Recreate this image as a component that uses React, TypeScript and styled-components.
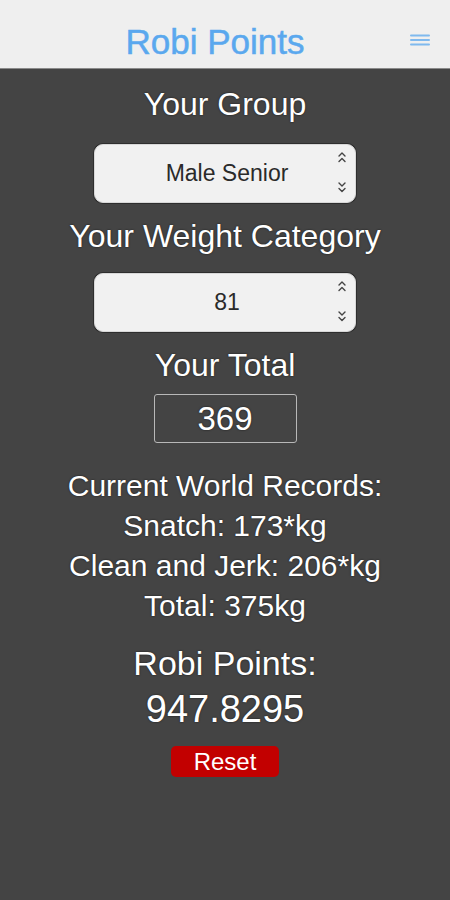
import styled, { createGlobalStyle } from 'styled-components';

const COLORS = {
  header: '#efefef',
  headerLine: '#8a8a8a',
  blue: '#5aa8ee',
  menu: '#7fb9ee',
  body: '#444444',
  white: '#ffffff',
  field: '#f1f1f1',
  fieldText: '#2a2a2a',
  red: '#c20000',
};

const GlobalStyle = createGlobalStyle`
  html, body {
    margin: 0;
    padding: 0;
    background: ${COLORS.body};
  }
  body {
    font-family: 'Liberation Sans', Arial, sans-serif;
  }
`;

function Chevrons() {
  return (
    <ChevronIcon width="10" height="48" viewBox="0 0 10 48">
      <g fill="none" stroke="#444" strokeWidth="1.4" strokeLinecap="round" strokeLinejoin="round">
        <path d="M2 7 L5 4 L8 7" />
        <path d="M2 12.5 L5 9.5 L8 12.5" />
        <path d="M2 34 L5 37 L8 34" />
        <path d="M2 39.5 L5 42.5 L8 39.5" />
      </g>
    </ChevronIcon>
  );
}

function MenuIcon() {
  return (
    <svg width="20" height="14" viewBox="0 0 20 14">
      <g fill={COLORS.menu}>
        <rect x="0" y="1.5" width="20" height="2" rx="1" />
        <rect x="0" y="6" width="20" height="2" rx="1" />
        <rect x="0" y="10.5" width="20" height="2" rx="1" />
      </g>
    </svg>
  );
}

function App() {
  return (
    <Layout>
      <GlobalStyle />
      <Header>
        <Title>Robi Points</Title>
        <MenuButton>
          <MenuIcon />
        </MenuButton>
      </Header>
      <Content>
        <Label $top={15}>Your Group</Label>
        <Picker $top={20}>
          <PickerValue>Male Senior</PickerValue>
          <Chevrons />
        </Picker>
        <Label $top={13}>Your Weight Category</Label>
        <Picker $top={17}>
          <PickerValue>81</PickerValue>
          <Chevrons />
        </Picker>
        <Label $top={13}>Your Total</Label>
        <TotalInput>369</TotalInput>
        <Records>
          <RecordLine>Current World Records:</RecordLine>
          <RecordLine>Snatch: 173*kg</RecordLine>
          <RecordLine>Clean and Jerk: 206*kg</RecordLine>
          <RecordLine>Total: 375kg</RecordLine>
        </Records>
        <ResultLabel>Robi Points:</ResultLabel>
        <ResultValue>947.8295</ResultValue>
        <ResetButton>Reset</ResetButton>
      </Content>
    </Layout>
  );
}

const Layout = styled.div`
  width: 450px;
  min-height: 900px;
  background: ${COLORS.body};
`;

const Header = styled.header`
  position: relative;
  height: 69px;
  box-sizing: border-box;
  padding-top: 15px;
  background: ${COLORS.header};
  border-bottom: 1px solid ${COLORS.headerLine};
  display: flex;
  align-items: center;
  justify-content: center;
`;

const Title = styled.h1`
  margin: 0 20px 0 0;
  font-size: 35px;
  font-weight: 400;
  color: ${COLORS.blue};
  -webkit-text-stroke: 0.5px ${COLORS.blue};
`;

const MenuButton = styled.div`
  position: absolute;
  right: 20px;
  top: 33px;
  display: flex;
`;

const Content = styled.main`
  display: flex;
  flex-direction: column;
  align-items: center;
  color: ${COLORS.white};
  text-shadow: 0 0 2px rgba(0, 0, 0, 0.7);
`;

const Label = styled.div<{ $top: number }>`
  margin-top: ${({ $top }) => $top}px;
  font-size: 32px;
  line-height: 40px;
`;

const Picker = styled.div<{ $top: number }>`
  position: relative;
  margin-top: ${({ $top }) => $top}px;
  width: 262px;
  height: 59px;
  box-sizing: border-box;
  border-radius: 9px;
  background: ${COLORS.field};
  border: 1px solid #d8d8d8;
  box-shadow: 0 0 0 1px #2e2e2e;
  display: flex;
  align-items: center;
  justify-content: center;
  text-shadow: none;
`;

const PickerValue = styled.span`
  font-size: 23px;
  color: ${COLORS.fieldText};
  margin-left: 4px;
`;

const ChevronIcon = styled.svg`
  position: absolute;
  right: 8px;
  top: 4px;
`;

const TotalInput = styled.div`
  margin-top: 9px;
  width: 143px;
  height: 49px;
  box-sizing: border-box;
  border: 1px solid #b8b8b8;
  border-radius: 3px;
  display: flex;
  align-items: center;
  justify-content: center;
  font-size: 33px;
`;

const Records = styled.div`
  margin-top: 23px;
  display: flex;
  flex-direction: column;
  align-items: center;
`;

const RecordLine = styled.div`
  font-size: 30px;
  line-height: 40px;
`;

const ResultLabel = styled.div`
  margin-top: 17px;
  font-size: 34px;
  line-height: 40px;
`;

const ResultValue = styled.div`
  margin-top: 4px;
  font-size: 38px;
  line-height: 44px;
`;

const ResetButton = styled.button`
  margin-top: 15px;
  width: 108px;
  height: 31px;
  border: none;
  border-radius: 5px;
  background: ${COLORS.red};
  color: ${COLORS.white};
  font-family: inherit;
  font-size: 24px;
  padding: 0;
  text-shadow: none;
  cursor: pointer;
`;

export default App;
